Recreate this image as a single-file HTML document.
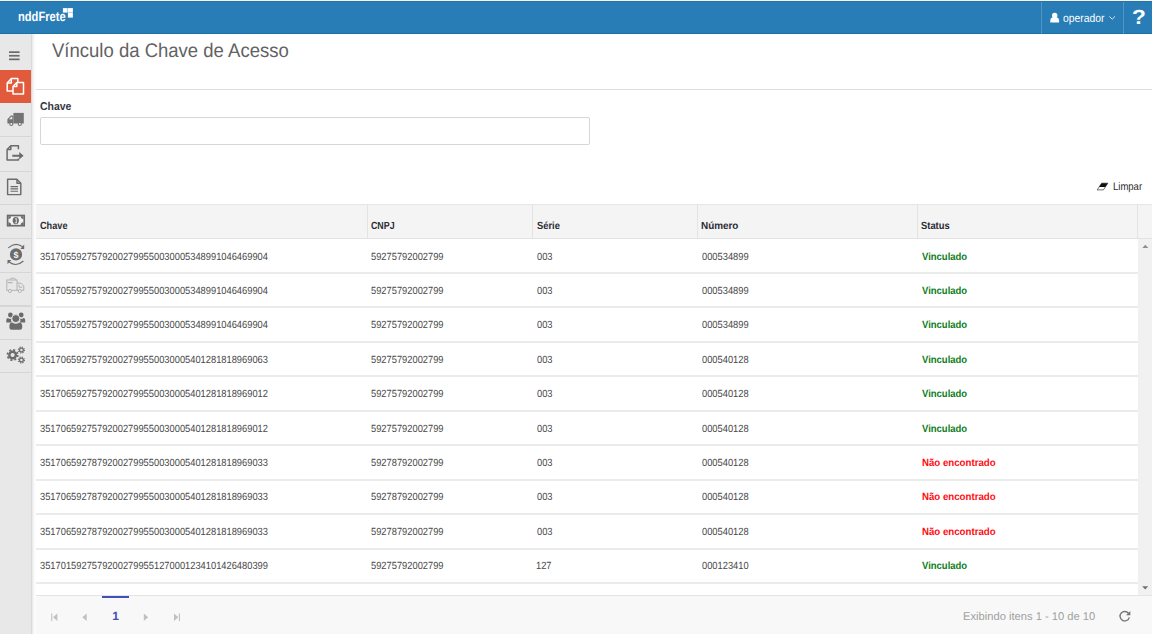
<!DOCTYPE html>
<html lang="pt-BR">
<head>
<meta charset="utf-8">
<title>nddFrete - Vínculo da Chave de Acesso</title>
<style>
*{box-sizing:border-box;margin:0;padding:0}
html,body{width:1152px;height:634px;overflow:hidden;background:#fff;font-family:"Liberation Sans",sans-serif;color:#333}
.t{text-rendering:geometricPrecision;position:absolute;white-space:nowrap;line-height:1;transform-origin:0 0;display:block}
#topstrip{position:absolute;left:0;top:0;width:1152px;height:2px;background:#fdf0e6}
#header{position:absolute;left:0;top:1.3px;width:1152px;height:32.3px;background:#287db6;border-top:1.4px solid #1d75b1;border-bottom:1.2px solid #1a70aa}
.hsep{position:absolute;top:2px;width:1px;height:32px;background:#4f95c5}
#sidebar{position:absolute;left:0;top:34px;width:31px;height:600px;background:#e8e8e8}
#sideshadow{position:absolute;left:31px;top:34px;width:5px;height:600px;background:linear-gradient(to right,#cfcfcf 0,#e9e9e9 25%,#f8f8f8 60%,#fff 100%)}
#active{position:absolute;left:0;top:70.4px;width:31px;height:32.6px;background:#e25a3c}
.sl{position:absolute;left:0;width:31px;height:1.2px;background:#d6d6d6}
#icons{position:absolute;left:0;top:0;width:1152px;height:634px;pointer-events:none}
#hr1{position:absolute;left:36px;top:89px;width:1116px;height:1px;background:#dedede}
#inp{position:absolute;left:40px;top:117px;width:550px;height:28px;border:1px solid #d6d6d6;border-radius:2px;background:#fff}
#thead{position:absolute;left:36px;top:204px;width:1116px;height:35px;background:#f4f4f4;border-top:1px solid #e6e6e6;border-bottom:1px solid #e2e2e2}
.vsep{position:absolute;top:0;width:1px;height:33px;background:#e3e3e3}
.rl{position:absolute;left:36px;width:1102px;height:2px;background:#ebebeb}
#scroll{position:absolute;left:1138px;top:239px;width:14px;height:356px;background:#f1f1f1}
#pager{position:absolute;left:36px;top:595px;width:1116px;height:39px;background:#f8f8f8;border-top:1px solid #e4e4e4}
#pgsel{position:absolute;left:102px;top:595.9px;width:26.8px;height:2.1px;background:#3f51b5}
</style>
</head>
<body>
<div id="topstrip"></div>
<div id="header"></div>
<div class="hsep" style="left:1041px"></div>
<div class="hsep" style="left:1123px"></div>
<div id="sidebar"></div>
<div id="active"></div>
<div class="sl" style="top:136.10px"></div>
<div class="sl" style="top:170.70px"></div>
<div class="sl" style="top:204.30px"></div>
<div class="sl" style="top:237.80px"></div>
<div class="sl" style="top:271.50px"></div>
<div class="sl" style="top:305.40px"></div>
<div class="sl" style="top:338.60px"></div>
<div class="sl" style="top:372.20px"></div>
<div class="sl" style="top:103px;background:#e2ecec;height:1px"></div>
<div id="sideshadow"></div>
<div id="hr1"></div>
<div id="inp"></div>
<div id="thead">
  <div class="vsep" style="left:330.5px"></div>
  <div class="vsep" style="left:496px"></div>
  <div class="vsep" style="left:661px"></div>
  <div class="vsep" style="left:881.3px"></div>
  <div class="vsep" style="left:1101px"></div>
</div>
<div class="rl" style="top:272px"></div>
<div class="rl" style="top:306px"></div>
<div class="rl" style="top:341px"></div>
<div class="rl" style="top:375px"></div>
<div class="rl" style="top:410px"></div>
<div class="rl" style="top:444px"></div>
<div class="rl" style="top:479px"></div>
<div class="rl" style="top:513px"></div>
<div class="rl" style="top:548px"></div>
<div class="rl" style="top:582px"></div>
<div id="scroll"></div>
<div id="pager"></div>
<div id="pgsel"></div>
<span class="t" style="left:17.77px;top:9.54px;font-size:13.3px;color:#fff;transform:scaleX(0.8378);font-weight:bold">nddFrete</span>
<span class="t" style="left:1063.36px;top:12.81px;font-size:11.8px;color:#fff;transform:scaleX(0.8774)">operador</span>
<span class="t" style="left:1131.90px;top:8.36px;font-size:20.6px;color:#fff;transform:scaleX(1.0988);font-weight:bold">?</span>
<span class="t" style="left:52.28px;top:42.21px;font-size:19.6px;color:#626262;transform:scaleX(0.9450)">Vínculo da Chave de Acesso</span>
<span class="t" style="left:39.94px;top:102.23px;font-size:11.3px;color:#36363f;transform:scaleX(0.9273);font-weight:bold">Chave</span>
<span class="t" style="left:1112.63px;top:181.66px;font-size:10.8px;color:#2a2a2a;transform:scaleX(0.8812)">Limpar</span>
<span class="t" style="left:39.97px;top:222.08px;font-size:10.3px;color:#2b2b33;transform:scaleX(0.8893);font-weight:bold">Chave</span>
<span class="t" style="left:370.98px;top:222.08px;font-size:10.3px;color:#2b2b33;transform:scaleX(0.8569);font-weight:bold">CNPJ</span>
<span class="t" style="left:536.67px;top:222.08px;font-size:10.3px;color:#2b2b33;transform:scaleX(0.9096);font-weight:bold">Série</span>
<span class="t" style="left:701.30px;top:222.08px;font-size:10.3px;color:#2b2b33;transform:scaleX(0.9611);font-weight:bold">Número</span>
<span class="t" style="left:921.17px;top:222.08px;font-size:10.3px;color:#2b2b33;transform:scaleX(0.9106);font-weight:bold">Status</span>
<span class="t" style="left:40.06px;top:253.00px;font-size:10.4px;color:#484848;transform:scaleX(0.8965)">35170559275792002799550030005348991046469904</span>
<span class="t" style="left:370.96px;top:253.00px;font-size:10.4px;color:#484848;transform:scaleX(0.8965)">59275792002799</span>
<span class="t" style="left:536.56px;top:253.00px;font-size:10.4px;color:#484848;transform:scaleX(0.8965)">003</span>
<span class="t" style="left:701.96px;top:253.00px;font-size:10.4px;color:#484848;transform:scaleX(0.8965)">000534899</span>
<span class="t" style="left:922.39px;top:253.00px;font-size:10.4px;color:#0b7d1a;transform:scaleX(0.9122);font-weight:bold">Vinculado</span>
<span class="t" style="left:40.06px;top:287.00px;font-size:10.4px;color:#484848;transform:scaleX(0.8965)">35170559275792002799550030005348991046469904</span>
<span class="t" style="left:370.96px;top:287.00px;font-size:10.4px;color:#484848;transform:scaleX(0.8965)">59275792002799</span>
<span class="t" style="left:536.56px;top:287.00px;font-size:10.4px;color:#484848;transform:scaleX(0.8965)">003</span>
<span class="t" style="left:701.96px;top:287.00px;font-size:10.4px;color:#484848;transform:scaleX(0.8965)">000534899</span>
<span class="t" style="left:922.39px;top:287.00px;font-size:10.4px;color:#0b7d1a;transform:scaleX(0.9122);font-weight:bold">Vinculado</span>
<span class="t" style="left:40.06px;top:321.00px;font-size:10.4px;color:#484848;transform:scaleX(0.8965)">35170559275792002799550030005348991046469904</span>
<span class="t" style="left:370.96px;top:321.00px;font-size:10.4px;color:#484848;transform:scaleX(0.8965)">59275792002799</span>
<span class="t" style="left:536.56px;top:321.00px;font-size:10.4px;color:#484848;transform:scaleX(0.8965)">003</span>
<span class="t" style="left:701.96px;top:321.00px;font-size:10.4px;color:#484848;transform:scaleX(0.8965)">000534899</span>
<span class="t" style="left:922.39px;top:321.00px;font-size:10.4px;color:#0b7d1a;transform:scaleX(0.9122);font-weight:bold">Vinculado</span>
<span class="t" style="left:40.06px;top:356.00px;font-size:10.4px;color:#484848;transform:scaleX(0.8965)">35170659275792002799550030005401281818969063</span>
<span class="t" style="left:370.96px;top:356.00px;font-size:10.4px;color:#484848;transform:scaleX(0.8965)">59275792002799</span>
<span class="t" style="left:536.56px;top:356.00px;font-size:10.4px;color:#484848;transform:scaleX(0.8965)">003</span>
<span class="t" style="left:701.96px;top:356.00px;font-size:10.4px;color:#484848;transform:scaleX(0.8965)">000540128</span>
<span class="t" style="left:922.39px;top:356.00px;font-size:10.4px;color:#0b7d1a;transform:scaleX(0.9122);font-weight:bold">Vinculado</span>
<span class="t" style="left:40.06px;top:390.00px;font-size:10.4px;color:#484848;transform:scaleX(0.8965)">35170659275792002799550030005401281818969012</span>
<span class="t" style="left:370.96px;top:390.00px;font-size:10.4px;color:#484848;transform:scaleX(0.8965)">59275792002799</span>
<span class="t" style="left:536.56px;top:390.00px;font-size:10.4px;color:#484848;transform:scaleX(0.8965)">003</span>
<span class="t" style="left:701.96px;top:390.00px;font-size:10.4px;color:#484848;transform:scaleX(0.8965)">000540128</span>
<span class="t" style="left:922.39px;top:390.00px;font-size:10.4px;color:#0b7d1a;transform:scaleX(0.9122);font-weight:bold">Vinculado</span>
<span class="t" style="left:40.06px;top:425.00px;font-size:10.4px;color:#484848;transform:scaleX(0.8965)">35170659275792002799550030005401281818969012</span>
<span class="t" style="left:370.96px;top:425.00px;font-size:10.4px;color:#484848;transform:scaleX(0.8965)">59275792002799</span>
<span class="t" style="left:536.56px;top:425.00px;font-size:10.4px;color:#484848;transform:scaleX(0.8965)">003</span>
<span class="t" style="left:701.96px;top:425.00px;font-size:10.4px;color:#484848;transform:scaleX(0.8965)">000540128</span>
<span class="t" style="left:922.39px;top:425.00px;font-size:10.4px;color:#0b7d1a;transform:scaleX(0.9122);font-weight:bold">Vinculado</span>
<span class="t" style="left:40.06px;top:459.00px;font-size:10.4px;color:#484848;transform:scaleX(0.8965)">35170659278792002799550030005401281818969033</span>
<span class="t" style="left:370.96px;top:459.00px;font-size:10.4px;color:#484848;transform:scaleX(0.8965)">59278792002799</span>
<span class="t" style="left:536.56px;top:459.00px;font-size:10.4px;color:#484848;transform:scaleX(0.8965)">003</span>
<span class="t" style="left:701.96px;top:459.00px;font-size:10.4px;color:#484848;transform:scaleX(0.8965)">000540128</span>
<span class="t" style="left:921.92px;top:459.00px;font-size:10.4px;color:#ff0a10;transform:scaleX(0.9306);font-weight:bold">Não encontrado</span>
<span class="t" style="left:40.06px;top:493.00px;font-size:10.4px;color:#484848;transform:scaleX(0.8965)">35170659278792002799550030005401281818969033</span>
<span class="t" style="left:370.96px;top:493.00px;font-size:10.4px;color:#484848;transform:scaleX(0.8965)">59278792002799</span>
<span class="t" style="left:536.56px;top:493.00px;font-size:10.4px;color:#484848;transform:scaleX(0.8965)">003</span>
<span class="t" style="left:701.96px;top:493.00px;font-size:10.4px;color:#484848;transform:scaleX(0.8965)">000540128</span>
<span class="t" style="left:921.92px;top:493.00px;font-size:10.4px;color:#ff0a10;transform:scaleX(0.9306);font-weight:bold">Não encontrado</span>
<span class="t" style="left:40.06px;top:528.00px;font-size:10.4px;color:#484848;transform:scaleX(0.8965)">35170659278792002799550030005401281818969033</span>
<span class="t" style="left:370.96px;top:528.00px;font-size:10.4px;color:#484848;transform:scaleX(0.8965)">59278792002799</span>
<span class="t" style="left:536.56px;top:528.00px;font-size:10.4px;color:#484848;transform:scaleX(0.8965)">003</span>
<span class="t" style="left:701.96px;top:528.00px;font-size:10.4px;color:#484848;transform:scaleX(0.8965)">000540128</span>
<span class="t" style="left:921.92px;top:528.00px;font-size:10.4px;color:#ff0a10;transform:scaleX(0.9306);font-weight:bold">Não encontrado</span>
<span class="t" style="left:40.06px;top:562.00px;font-size:10.4px;color:#484848;transform:scaleX(0.8965)">35170159275792002799551270001234101426480399</span>
<span class="t" style="left:370.96px;top:562.00px;font-size:10.4px;color:#484848;transform:scaleX(0.8965)">59275792002799</span>
<span class="t" style="left:536.23px;top:562.00px;font-size:10.4px;color:#484848;transform:scaleX(0.8965)">127</span>
<span class="t" style="left:701.96px;top:562.00px;font-size:10.4px;color:#484848;transform:scaleX(0.8965)">000123410</span>
<span class="t" style="left:922.39px;top:562.00px;font-size:10.4px;color:#0b7d1a;transform:scaleX(0.9122);font-weight:bold">Vinculado</span>
<span class="t" style="left:112.35px;top:610.04px;font-size:12px;color:#3f51b5;transform:scaleX(1.0000);font-weight:bold">1</span>
<span class="t" style="left:963.23px;top:612.23px;font-size:11.3px;color:#a0a0a0;transform:scaleX(0.9887)">Exibindo itens 1 - 10 de 10</span>
<svg id="icons" width="1152" height="634" viewBox="0 0 1152 634">
<!-- logo squares -->
<g fill="#fff">
<rect x="62.9" y="8.1" width="4.7" height="4.5"/><rect x="67.9" y="8.1" width="5" height="4.5"/><rect x="67.9" y="12.85" width="5" height="4.75"/>
</g>
<!-- user icon -->
<g fill="#fff">
<circle cx="1054.7" cy="15.4" r="2.7"/>
<path d="M1050.3 22.5 v-2.2 q0-2.6 2.4-3 q2 1.3 4 0 q2.4 0.4 2.4 3 v2.2 z"/>
</g>
<polyline points="1109.4,16.4 1112.2,19.2 1115,16.4" fill="none" stroke="#d5e5f1" stroke-width="1"/>
<!-- hamburger -->
<g fill="#6b6b6b">
<rect x="9" y="51.3" width="10.6" height="1.7"/><rect x="9" y="54.9" width="10.6" height="1.7"/><rect x="9" y="58.5" width="10.6" height="1.7"/>
</g>
<!-- copy icon (active, white) -->
<g fill="none" stroke="#fff" stroke-width="1.5" stroke-linejoin="round">
<path d="M12.6 90.9 H7.2 V83 L11.3 78.6 H17.8 V82"/>
<path d="M11.3 78.8 V83 H7.4"/>
<path d="M13 86.6 L16.8 82.6 H23.5 V94 H13 Z"/>
<path d="M16.8 82.8 V86.6 H13.2"/>
</g>
<!-- truck (flipped) -->
<g fill="#747474">
<rect x="13.4" y="112.9" width="10.4" height="10.6"/>
<path d="M13.4 115.6 H10.8 L7.4 119.2 V123.5 H13.4 Z M12.3 116.8 H11.2 L9 119.2 H12.3 Z" fill-rule="evenodd"/>
<circle cx="11.3" cy="124" r="2.1"/><circle cx="19.8" cy="124" r="2.1"/>
</g>
<circle cx="11.3" cy="124" r="0.95" fill="#f2f2f2"/><circle cx="19.8" cy="124" r="0.95" fill="#f2f2f2"/>
<!-- export -->
<g fill="none" stroke="#6b6b6b" stroke-width="1.5" stroke-linejoin="round">
<path d="M18.4 149.2 V145.8 H10.8 L7.1 149.6 V160 H18.4 V158.6"/>
<path d="M10.8 146 V149.6 H7.3"/>
</g>
<path d="M12.3 154.7 H19.2 V151.9 L23.6 155.7 L19.2 159.5 V156.7 H12.3 Z" fill="#6b6b6b"/>
<!-- file text -->
<g fill="none" stroke="#6b6b6b" stroke-width="1.45" stroke-linejoin="round">
<path d="M7.6 179.2 H16.8 L20.8 183.2 V194.6 H7.6 Z"/>
<path d="M17 179.4 V183.2 H20.8"/>
<path d="M10.5 186.6 H18 M10.5 188.9 H18 M10.5 191.2 H18" stroke-width="1.1"/>
</g>
<!-- money -->
<rect x="7.6" y="215.5" width="16.6" height="10.2" fill="#f1f1f1" stroke="#6b6b6b" stroke-width="1.7"/>
<path d="M8.4 216.3 h2.6 a2.6 2.6 0 0 1 -2.6 2.6 z M23.4 216.3 v2.6 a2.6 2.6 0 0 1 -2.6 -2.6 z M8.4 224.9 v-2.6 a2.6 2.6 0 0 1 2.6 2.6 z M23.4 224.9 h-2.6 a2.6 2.6 0 0 1 2.6 -2.6 z" fill="#6b6b6b"/>
<ellipse cx="15.8" cy="220.6" rx="3.1" ry="3.7" fill="#6b6b6b"/>
<path d="M15 219.2 L16.3 218.4 V222.8 M14.9 222.8 H17" stroke="#e8e8e8" stroke-width="0.9" fill="none"/>
<!-- refresh $ -->
<circle cx="16" cy="254.4" r="6.1" fill="#6b6b6b"/>
<g fill="none" stroke="#6b6b6b" stroke-width="1.1">
<path d="M8.3 247.8 Q15.5 241.4 22.6 246.8"/>
<path d="M23.4 261 Q16.3 267.4 9.2 262"/>
</g>
<path d="M24.2 244.6 V248.9 H20.3 Z" fill="#6b6b6b"/>
<path d="M7.5 264.2 V259.9 H11.4 Z" fill="#6b6b6b"/>
<text x="16" y="257.7" font-family="Liberation Sans, sans-serif" font-weight="bold" font-size="9" fill="#f4f4f4" text-anchor="middle">$</text>
<!-- light truck -->
<g fill="none" stroke="#b3b3b3" stroke-width="1">
<rect x="6.8" y="280" width="10.2" height="10.3"/>
<path d="M9.5 280 L11 278.2 H14.5 L16 280"/>
<path d="M17 283.2 H21 L23.8 286 V290.3 H17"/>
<path d="M19 284.6 V287.2 H22.3"/>
<path d="M7.6 282.6 H12.6" stroke-width="1.2"/>
</g>
<circle cx="10" cy="291" r="1.5" fill="#f4f4f4" stroke="#b3b3b3" stroke-width="1"/><circle cx="19.8" cy="291" r="1.5" fill="#f4f4f4" stroke="#b3b3b3" stroke-width="1"/>
<!-- users -->
<g fill="#6b6b6b">
<circle cx="10.4" cy="315" r="2.4"/><circle cx="21.2" cy="315" r="2.4"/>
<path d="M6.3 322.4 V320 Q6.3 318.2 8 318 Q10 319.4 11.4 318.6 Q10.6 320.6 11.6 322.4 Z"/>
<path d="M25.2 322.4 V320 Q25.2 318.2 23.5 318 Q21.5 319.4 20.1 318.6 Q20.9 320.6 19.9 322.4 Z"/>
<circle cx="15.8" cy="318.6" r="4" stroke="#e8e8e8" stroke-width="0.9"/>
<path d="M9.4 327.6 V326 Q9.4 322.8 12.2 322.6 Q15.8 325 19.4 322.6 Q22.2 322.8 22.2 326 V327.6 Q22.2 329.8 20 329.8 H11.6 Q9.4 329.8 9.4 327.6 Z"/>
</g>
<!-- cogs -->
<g fill="none" stroke="#6b6b6b">
<circle cx="12.6" cy="355" r="3.3" stroke-width="2.4"/>
<circle cx="12.6" cy="355" r="5.2" stroke-width="1.6" stroke-dasharray="2.04 2.04"/>
<circle cx="21.4" cy="350" r="1.9" stroke-width="1.3"/>
<circle cx="21.4" cy="350" r="3" stroke-width="1.2" stroke-dasharray="1.18 1.18"/>
<circle cx="21.4" cy="360" r="1.9" stroke-width="1.3"/>
<circle cx="21.4" cy="360" r="3" stroke-width="1.2" stroke-dasharray="1.18 1.18"/>
</g>
<!-- eraser -->
<path d="M1101.6 183.2 H1107.8 L1103.4 189.9 H1097.2 Z" fill="#fff" stroke="#333" stroke-width="0.7" stroke-linejoin="round"/>
<path d="M1101.6 183.2 H1107.8 L1105.3 187 H1099.1 Z" fill="#111"/>
<!-- scroll arrows -->
<path d="M1142.3 248 L1145.3 244.8 L1148.3 248 Z" fill="#8e8e8e"/>
<path d="M1142.2 586.3 L1145.2 589.6 L1148.2 586.3 Z" fill="#6f6f6f"/>
<!-- pager -->
<g fill="#c0c0c0">
<rect x="51.2" y="613.5" width="1.1" height="7.6"/><path d="M57.4 613.6 V621 L53 617.3 Z"/>
<path d="M86.7 613.6 V621 L82.3 617.3 Z"/>
<path d="M143.8 613.6 V621 L148.2 617.3 Z"/>
<path d="M174 613.6 V621 L178.4 617.3 Z"/><rect x="178.9" y="613.5" width="1.1" height="7.6"/>
</g>
<!-- refresh -->
<path d="M1128.7 613.7 A4.7 4.7 0 1 0 1129.3 617.3" fill="none" stroke="#747474" stroke-width="1.35"/>
<path d="M1130.3 610.9 V615.2 H1126 Z" fill="#747474"/>
</svg>

</body>
</html>
